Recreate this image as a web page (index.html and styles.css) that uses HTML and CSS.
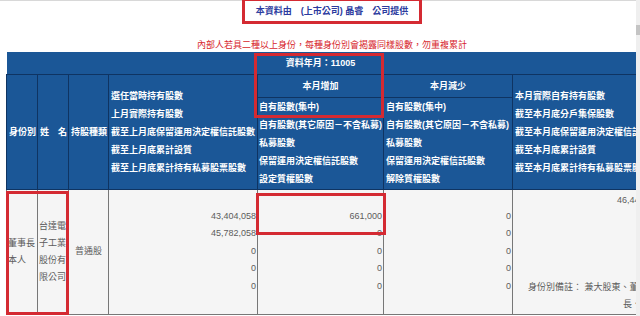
FILE: index.html
```html
<!DOCTYPE html>
<html lang="zh-Hant">
<head>
<meta charset="utf-8">
<title>內部人持股異動</title>
<link rel="stylesheet" href="styles.css">
</head>
<body>
<div class="page">
  <div class="title-bar"><span class="title">本資料由　(上市公司) 晶睿　公司提供</span></div>
  <div class="note">內部人若具二種以上身份，每種身份別會揭露同樣股數，勿重複累計</div>
  <table class="grid">
    <colgroup>
      <col class="c-role"><col class="c-name"><col class="c-kind"><col class="c-prev"><col class="c-inc"><col class="c-dec"><col class="c-now">
    </colgroup>
    <tr class="r1">
      <th colspan="4"></th>
      <th class="center">資料年月：11005</th>
      <th colspan="2"></th>
    </tr>
    <tr class="r2">
      <th rowspan="2" class="left">身份別</th>
      <th rowspan="2" class="left">姓　名</th>
      <th rowspan="2" class="left">持股種類</th>
      <th rowspan="2" class="left list">
        <div>選任當時持有股數</div>
        <div>上月實際持有股數</div>
        <div>截至上月底保留運用決定權信託股數</div>
        <div>截至上月底累計設質</div>
        <div>截至上月底累計持有私募股票股數</div>
      </th>
      <th class="center">本月增加</th>
      <th class="center">本月減少</th>
      <th rowspan="2" class="left list">
        <div>本月實際自有持有股數</div>
        <div>截至本月底分戶集保股數</div>
        <div>截至本月底保留運用決定權信託股數</div>
        <div>截至本月底累計設質</div>
        <div>截至本月底累計持有私募股票股數</div>
      </th>
    </tr>
    <tr class="r3">
      <th class="left list tight">
        <div>自有股數(集中)</div>
        <div>自有股數(其它原因－不含私募)</div>
        <div>私募股數</div>
        <div>保留運用決定權信託股數</div>
        <div>設定質權股數</div>
      </th>
      <th class="left list">
        <div>自有股數(集中)</div>
        <div>自有股數(其它原因－不含私募)</div>
        <div>私募股數</div>
        <div>保留運用決定權信託股數</div>
        <div>解除質權股數</div>
      </th>
    </tr>
    <tr class="r4">
      <td class="wrap">董事長本人</td>
      <td class="wrap">台達電子工業股份有限公司</td>
      <td class="center">普通股</td>
      <td class="num">
        <div>43,404,058</div>
        <div>45,782,058</div>
        <div>0</div>
        <div>0</div>
        <div>0</div>
      </td>
      <td class="num">
        <div>661,000</div>
        <div>0</div>
        <div>0</div>
        <div>0</div>
        <div>0</div>
      </td>
      <td class="num">
        <div>0</div>
        <div>0</div>
        <div>0</div>
        <div>0</div>
        <div>0</div>
      </td>
      <td class="last">
        <div class="last-num">46,443,058</div>
        <div class="remark">
          <div class="remark-1">身份別備註：&nbsp;兼大股東、董事長</div>
          <div class="remark-2">長、大股東</div>
        </div>
      </td>
    </tr>
  </table>

  <div class="mark mark-head"></div>
  <div class="mark mark-value"></div>
  <div class="mark mark-person"></div>
</div>
<div class="vscroll"><div class="vthumb"></div></div>
</body>
</html>
```

FILE: styles.css
```css
html, body {
  margin: 0;
  padding: 0;
  overflow: hidden;
  background: #ffffff;
}

body {
  width: 640px;
  height: 316px;
  font-family: "Liberation Sans", "Noto Sans CJK TC", sans-serif;
  font-size: 9px;
}

.page {
  position: relative;
  width: 668px;
  border-top: 1px solid #d8d8d8;
}

.title-bar {
  height: 25px;
  display: flex;
  justify-content: center;
  align-items: flex-start;
  padding-right: 4px;
}

.title {
  display: inline-block;
  margin-top: -3px;
  border: 3px solid #d42a32;
  padding: 0 11px;
  line-height: 20px;
  font-size: 9px;
  font-weight: bold;
  color: #2b3a9e;
  white-space: pre;
}

.note {
  height: 26px;
  box-sizing: border-box;
  padding-top: 13px;
  padding-right: 4px;
  line-height: 12px;
  font-size: 9px;
  color: #d7262d;
  text-align: center;
  white-space: nowrap;
}

.grid {
  margin-left: 6px;
  width: 658px;
  table-layout: fixed;
  border-collapse: collapse;
}

.c-role { width: 31px; }
.c-name { width: 31px; }
.c-kind { width: 40px; }
.c-prev { width: 149px; }
.c-inc  { width: 126px; }
.c-dec  { width: 129px; }
.c-now  { width: 152px; }

.grid th {
  background: #1b5797;
  color: #ffffff;
  font-weight: bold;
  font-size: 9px;
  line-height: 18px;
  border: 1px solid #0f3462;
  padding: 0 2px;
  white-space: nowrap;
  overflow: hidden;
  vertical-align: middle;
}

.grid th.left { text-align: left; }
.grid th.center { text-align: center; }
.grid th.tight { padding-left: 1px; }

.r1 th {
  border-top: none;
  border-left: none;
  border-right: none;
}

.r1 { height: 22px; }
.r2 { height: 23px; }
.r3 { height: 92px; }
.r4 { height: 124px; }

.grid td {
  background: #f5f5f5;
  color: #5c5c5c;
  font-size: 9px;
  border: 1px solid #777777;
  vertical-align: middle;
  padding: 0 1px;
}

.grid td.wrap {
  line-height: 17px;
  text-align: left;
  padding-left: 1px;
}

.grid td.center {
  text-align: center;
  line-height: 17px;
}

.grid td.num {
  text-align: right;
  line-height: 17.5px;
  padding-right: 1px;
}

.grid td.last {
  vertical-align: top;
  padding: 2px 2px 0 0;
  white-space: nowrap;
  overflow: hidden;
}

.last-num {
  text-align: right;
  line-height: 17px;
}

.remark {
  margin-top: 70px;
  line-height: 17.5px;
}

.remark-1 { padding-left: 15px; }
.remark-2 { padding-left: 110px; }

.mark {
  position: absolute;
  box-sizing: border-box;
  border: 3px solid #d42a32;
}

.mark-head {
  left: 254px;
  top: 52px;
  width: 130px;
  height: 65px;
}

.mark-value {
  left: 256px;
  top: 192px;
  width: 130px;
  height: 42px;
}

.mark-person {
  left: 6px;
  top: 190px;
  width: 63px;
  height: 124px;
}

.vscroll {
  position: fixed;
  top: 0;
  right: 0;
  width: 4px;
  height: 316px;
  background: #efefef;
}

.vthumb {
  margin-top: 25px;
  height: 10px;
  background: #c4c4c4;
}
```
